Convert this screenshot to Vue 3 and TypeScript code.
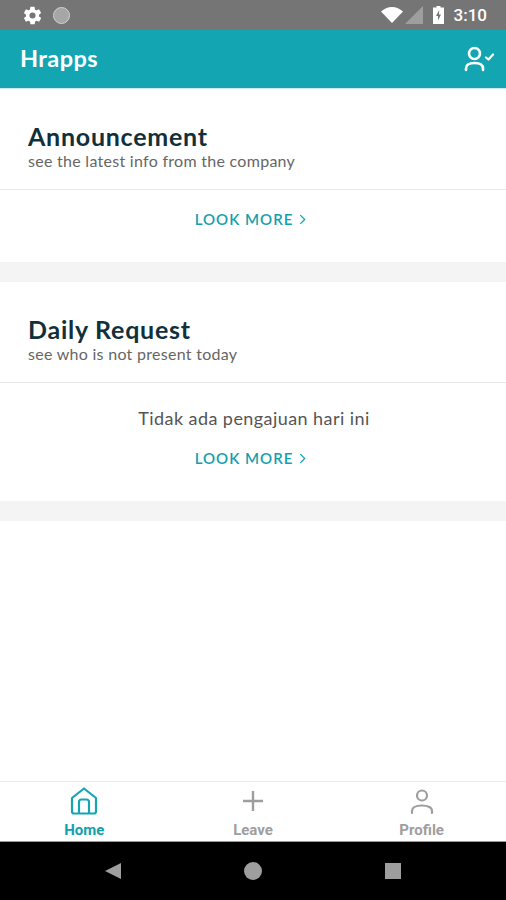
<script setup lang="ts">
interface Tab {
  label: string
  active?: boolean
}

const tabs: Tab[] = [
  { label: 'Home', active: true },
  { label: 'Leave' },
  { label: 'Profile' }
]
</script>

<template>
  <div class="screen">
    <!-- status bar -->
    <div class="status">
      <div class="status-left">
        <svg class="gear" viewBox="0 0 24 24" width="21" height="21">
          <path fill="#fff" d="M19.4 13c.04-.32.1-.66.1-1s-.06-.68-.1-1l2.1-1.65c.2-.15.25-.42.12-.64l-2-3.46c-.12-.22-.39-.3-.61-.22l-2.49 1c-.52-.4-1.08-.73-1.69-.98l-.38-2.65A.49.49 0 0 0 14 2h-4c-.25 0-.46.18-.49.42l-.38 2.65c-.61.25-1.17.59-1.69.98l-2.49-1c-.23-.09-.49 0-.61.22l-2 3.46c-.13.22-.07.49.12.64L4.6 11c-.04.32-.1.66-.1 1s.06.68.1 1l-2.1 1.65c-.19.15-.25.42-.12.64l2 3.46c.12.22.39.3.61.22l2.49-1c.52.4 1.08.73 1.69.98l.38 2.65c.03.24.24.42.49.42h4c.25 0 .46-.18.49-.42l.38-2.65c.61-.25 1.17-.59 1.69-.98l2.49 1c.23.09.49 0 .61-.22l2-3.46c.12-.22.07-.49-.12-.64L19.4 13zM12 15.5a3.5 3.5 0 1 1 0-7 3.5 3.5 0 0 1 0 7z" />
        </svg>
        <span class="dot"></span>
      </div>
      <div class="status-right">
        <svg viewBox="0 0 22 16" width="22" height="16">
          <path fill="#fff" d="M0 4.500C3 1.800 6.800 0 11 0s8 1.800 11 4.500L11 16z" />
        </svg>
        <svg class="signal" viewBox="0 0 18 18" width="18" height="18">
          <path fill="#9e9e9e" d="M18 0v18H0z" />
        </svg>
        <svg class="battery" viewBox="0 0 11 18" width="11" height="18">
          <path fill="#fff" d="M3.500 0h4v1.500H11V18H0V1.500h3.500z" />
          <path fill="#757575" d="M6.200 4 3 10h2v4.500L8 8.500H6z" />
        </svg>
        <span class="time">3:10</span>
      </div>
    </div>

    <!-- app bar -->
    <header class="appbar">
      <span class="brand">Hrapps</span>
      <svg class="user-check" viewBox="0 0 30 26" width="30" height="26" fill="none" stroke="#fff" stroke-width="2.600" stroke-linecap="round" stroke-linejoin="round">
        <circle cx="10.500" cy="7.500" r="5.500" />
        <path d="M2 24v-1.500c0-3.500 3-5.500 8.500-5.500s8.500 2 8.500 5.500V24" />
        <path d="M22 11.500l2.500 2 4.500-5" stroke-width="2.200" />
      </svg>
    </header>

    <main class="content">
      <section class="card">
        <div class="card-head">
          <h2>Announcement</h2>
          <p>see the latest info from the company</p>
        </div>
        <div class="card-body first">
          <a class="more">LOOK MORE
            <svg viewBox="0 0 8 12" width="7" height="11" fill="none" stroke="#13a6b2" stroke-width="1.500"><path d="M1.500 1l5 5-5 5" /></svg>
          </a>
        </div>
      </section>
      <div class="spacer"></div>
      <section class="card">
        <div class="card-head">
          <h2>Daily Request</h2>
          <p>see who is not present today</p>
        </div>
        <div class="card-body second">
          <div class="empty">Tidak ada pengajuan hari ini</div>
          <a class="more">LOOK MORE
            <svg viewBox="0 0 8 12" width="7" height="11" fill="none" stroke="#13a6b2" stroke-width="1.500"><path d="M1.500 1l5 5-5 5" /></svg>
          </a>
        </div>
      </section>
      <div class="spacer"></div>
    </main>

    <!-- bottom tabs -->
    <nav class="tabs">
      <div v-for="tab in tabs" :key="tab.label" class="tab" :class="{ active: tab.active }">
        <svg v-if="tab.label === 'Home'" viewBox="0 0 30 30" width="30" height="30" fill="none" stroke="#13a6b2" stroke-width="2.200" stroke-linejoin="round">
          <path d="M15 2.500 3 12v13.500a2 2 0 0 0 2 2h20a2 2 0 0 0 2-2V12z" />
          <path d="M10 27.500V16a2.500 2.500 0 0 1 2.500-2.500h5A2.500 2.500 0 0 1 20 16v11.500" />
        </svg>
        <svg v-else-if="tab.label === 'Leave'" viewBox="0 0 30 30" width="30" height="30" fill="none" stroke="#9e9e9e" stroke-width="2.400">
          <path d="M15 5v20M5 15h20" />
        </svg>
        <svg v-else viewBox="0 0 30 30" width="30" height="30" fill="none" stroke="#9e9e9e" stroke-width="2.200" stroke-linecap="round">
          <circle cx="15" cy="9.500" r="5" />
          <path d="M5 27v-2c0-3.500 3.500-5.500 10-5.500s10 2 10 5.500v2" />
        </svg>
        <span>{{ tab.label }}</span>
      </div>
    </nav>

    <!-- android nav -->
    <div class="sysnav">
      <span class="back"></span>
      <span class="home"></span>
      <span class="recent"></span>
    </div>
  </div>
</template>

<style>
html,
body {
  margin: 0;
  background: #fff;
}
</style>

<style scoped>
.screen {
  width: 506px;
  height: 900px;
  display: flex;
  flex-direction: column;
  overflow: hidden;
  font-family: Lato, "Open Sans", sans-serif;
  background: #fff;
}

.status {
  height: 30px;
  background: #757575;
  display: flex;
  align-items: center;
  justify-content: space-between;
  padding: 0 19px 0 22px;
  flex-shrink: 0;
}
.status-left,
.status-right {
  display: flex;
  align-items: center;
}
.dot {
  width: 17px;
  height: 17px;
  margin-left: 10px;
  border-radius: 50%;
  background: #a6a6a6;
  border: 1px solid #d0d0d0;
  box-sizing: border-box;
}
.signal {
  margin-left: 2px;
}
.battery {
  margin-left: 10px;
}
.time {
  margin-left: 10px;
  color: #fff;
  font: 500 17px Roboto, sans-serif;
}

.appbar {
  height: 58px;
  background: #13a6b2;
  border-bottom: 1px solid #cdeaee;
  display: flex;
  align-items: center;
  justify-content: space-between;
  padding: 0 12px 0 20px;
  flex-shrink: 0;
}
.brand {
  color: #fff;
  font-size: 23.5px;
  line-height: 26px;
  font-weight: 700;
  letter-spacing: 0.4px;
  margin-bottom: 2px;
}

.content {
  flex: 1;
}
.card-head {
  padding: 33px 28px 0;
  height: 67px;
  border-bottom: 1px solid #e8e8e8;
}
.card-head h2 {
  margin: 0;
  color: #12303a;
  font-size: 25px;
  line-height: 29px;
  font-weight: 700;
  letter-spacing: 0.75px;
}
.card-head p {
  margin: 0;
  color: #666;
  font-size: 16px;
  line-height: 20px;
  letter-spacing: 0.28px;
}
.card-body {
  display: flex;
  flex-direction: column;
  align-items: center;
}
.first {
  height: 53px;
  padding-top: 19px;
}
.second {
  height: 118px;
}
.empty {
  margin-top: 24px;
  margin-bottom: 19px;
  margin-left: 2px;
  color: #555;
  font-size: 18px;
  line-height: 22px;
  letter-spacing: 0.43px;
}
.more {
  color: #13a0ac;
  font-size: 15px;
  line-height: 20px;
  font-weight: 600;
  letter-spacing: 1px;
  display: flex;
  align-items: center;
  gap: 6px;
  margin-right: 5px;
}
.spacer {
  height: 20px;
  background: #f4f4f4;
}

.tabs {
  height: 59px;
  flex-shrink: 0;
  border-top: 1px solid #ebebeb;
  border-bottom: 1px solid #9a9a9a;
  display: grid;
  grid-template-columns: repeat(3, 1fr);
}
.tab {
  display: flex;
  flex-direction: column;
  align-items: center;
  padding-top: 4px;
  color: #9e9e9e;
  font: 700 15px Roboto, sans-serif;
  line-height: 17px;
  gap: 6px;
}
.tab.active {
  color: #13a0ac;
}

.sysnav {
  height: 58px;
  background: #000;
  display: flex;
  align-items: center;
  justify-content: space-between;
  padding: 0 105px;
  flex-shrink: 0;
}
.back {
  width: 0;
  height: 0;
  border-top: 8px solid transparent;
  border-bottom: 8px solid transparent;
  border-right: 16px solid #9e9e9e;
}
.home {
  width: 18px;
  height: 18px;
  border-radius: 50%;
  background: #9e9e9e;
}
.recent {
  width: 16px;
  height: 16px;
  background: #9e9e9e;
}
</style>
